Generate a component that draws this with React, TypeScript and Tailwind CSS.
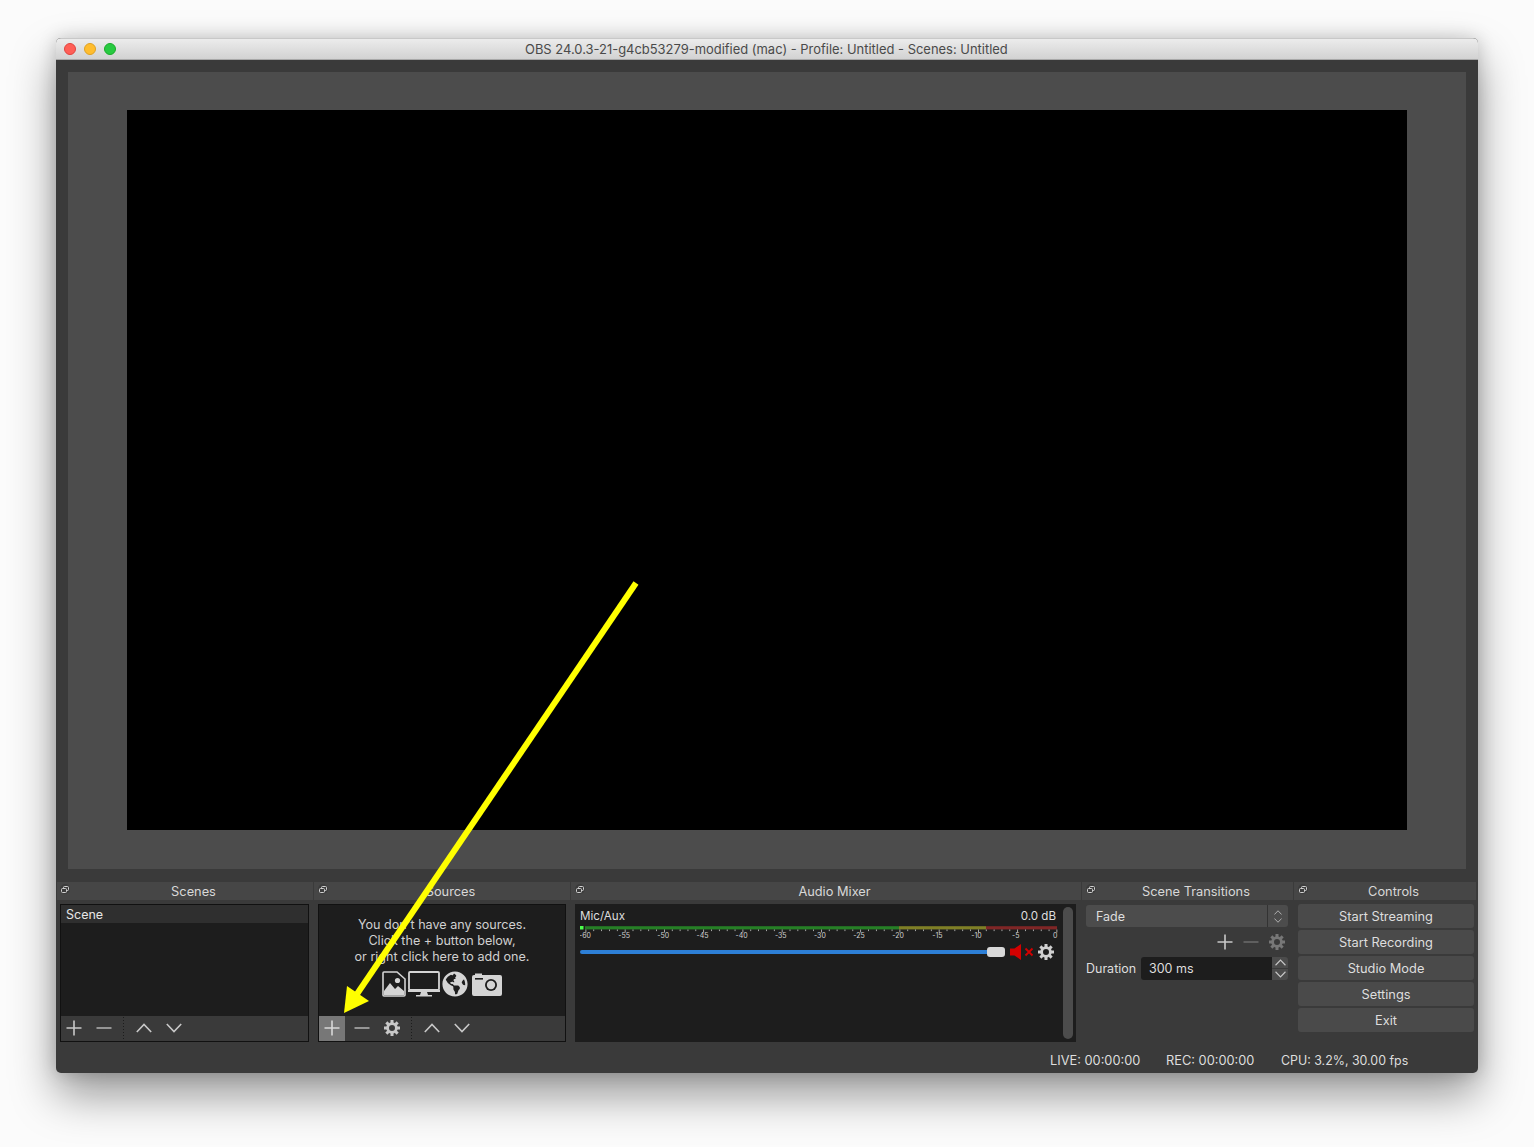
import React, { FC } from "react";
import { FaGlobeAmericas } from "react-icons/fa";

const font = "font-['Inter','Liberation_Sans',sans-serif]";

const PlusIcon: FC<{ color?: string }> = ({ color = "#c8c8c8" }) => (
  <svg width="16" height="16" viewBox="0 0 16 16">
    <path d="M8 0.5V15.5M0.5 8H15.5" stroke={color} strokeWidth="1.6" fill="none" />
  </svg>
);

const MinusIcon: FC<{ color?: string }> = ({ color = "#b4b4b4" }) => (
  <svg width="16" height="16" viewBox="0 0 16 16">
    <path d="M0.5 8H15.5" stroke={color} strokeWidth="1.5" fill="none" />
  </svg>
);

const ChevronIcon: FC<{ up?: boolean; color?: string; w?: number; h?: number }> = ({ up, color = "#c8c8c8", w = 16, h = 10 }) => (
  <svg width={w} height={h} viewBox="0 0 16 10">
    <path d={up ? "M0.8 9L8 1.5L15.2 9" : "M0.8 1L8 8.5L15.2 1"} stroke={color} strokeWidth="1.6" fill="none" />
  </svg>
);

const GearIcon: FC<{ color?: string; size?: number }> = ({ color = "#c8c8c8", size = 16 }) => (
  <svg width={size} height={size} viewBox="0 0 16 16">
    <circle cx="8" cy="8" r="4.4" stroke={color} strokeWidth="2.8" fill="none" />
    {[0, 45, 90, 135, 180, 225, 270, 315].map((deg) => (
      <rect key={deg} x="6.5" y="0" width="3" height="3" fill={color} transform={`rotate(${deg} 8 8)`} />
    ))}
  </svg>
);

const FloatIcon: FC<{ first?: boolean }> = ({ first }) => (
  <div className={`mt-[2px] flex h-[10px] w-[10px] shrink-0 items-center justify-center rounded-full bg-[#3c3c3c] ${first ? "ml-[3px]" : "ml-[4px]"}`}>
    <svg width="8" height="7" viewBox="0 0 8 7">
      <rect x="2.5" y="0.5" width="5" height="4" rx="1" fill="none" stroke="#d0d0d0" />
      <rect x="0.5" y="2.5" width="5" height="4" rx="1" fill="#3c3c3c" stroke="#d0d0d0" />
    </svg>
  </div>
);

// dock title bar + body
const Dock: FC<{ title: string; width: string; first?: boolean; children: React.ReactNode }> = ({ title, width, first, children }) => (
  <div className={`flex shrink-0 flex-col ${width}`}>
    <div className="relative flex h-[18px] items-start bg-[#464646]">
      <FloatIcon first={first} />
      <div className="absolute inset-x-0 top-0 pl-[17px] text-center text-[12.8px] leading-[20px] text-[#d8d8d8]">{title}</div>
    </div>
    {children}
  </div>
);

const ToolSlot: FC<{ children: React.ReactNode; active?: boolean }> = ({ children, active }) => (
  <div className={`flex h-full w-[26px] shrink-0 items-center justify-center pb-[1px] ${active ? "bg-[#777777]" : ""}`}>{children}</div>
);

const Dots: FC = () => (
  <div className="ml-[6px] mr-[7px] h-[24px] w-[1px] bg-[repeating-linear-gradient(to_bottom,#1c1c1c_0,#1c1c1c_1px,transparent_1px,transparent_3px)]" />
);

// audio meter: green/yellow/red bar, ticks and dB scale
const Meter: FC = () => {
  const ticks = Array.from({ length: 61 }, (_, i) => i);
  const scale = [-60, -55, -50, -45, -40, -35, -30, -25, -20, -15, -10, -5, 0];
  return (
    <svg width="482" height="16" viewBox="0 0 482 16" className="block">
      <rect x="0" y="0" width="3.5" height="3.5" fill="#4cff4c" />
      <rect x="5" y="0.2" width="314" height="3.2" fill="#267f26" />
      <rect x="319" y="0.2" width="87" height="3.2" fill="#7f7f26" />
      <rect x="406" y="0.2" width="71" height="3.2" fill="#7f2626" />
      {ticks.map((i) => {
        const x = 5.5 + i * 7.85;
        return <rect key={i} x={x} y="3.5" width="0.8" height={i % 5 === 0 ? 3 : 1.6} fill="#c8c8c8" />;
      })}
      {scale.map((db) => (
        <text key={db} x={db === 0 ? 477.5 : 5 + (db + 60) * 7.83} y="11.5" fontSize="7" fill="#d0d0d0" textAnchor={db === 0 ? "end" : "middle"} fontFamily="Inter, sans-serif">
          {db}
        </text>
      ))}
    </svg>
  );
};

const ImageIcon: FC = () => (
  <svg width="24" height="26" viewBox="0 0 24 26">
    <path d="M2 1H15L23 8V24a1 1 0 0 1-1 1H2a1 1 0 0 1-1-1V2a1 1 0 0 1 1-1Z" fill="#1d1d1d" stroke="#d4d4d4" strokeWidth="1.6" />
    <circle cx="15.5" cy="9.5" r="2.6" fill="#d4d4d4" />
    <path d="M2 24V20L8 12L13 18L16 15L22 20V24Z" fill="#d4d4d4" />
  </svg>
);

const MonitorIcon: FC = () => (
  <svg width="32" height="26" viewBox="0 0 32 26">
    <rect x="1" y="1" width="30" height="18" rx="1" fill="none" stroke="#d4d4d4" strokeWidth="1.8" />
    <rect x="0" y="19" width="32" height="2" fill="#d4d4d4" />
    <path d="M13 21H19L20 24H24V25.5H8V24H12Z" fill="#d4d4d4" />
  </svg>
);

const CameraIcon: FC = () => (
  <svg width="30" height="24" viewBox="0 0 30 24">
    <path d="M2 3H3V1.5H10V3H28a2 2 0 0 1 2 2V22a2 2 0 0 1-2 2H2a2 2 0 0 1-2-2V5a2 2 0 0 1 2-2Z" fill="#d4d4d4" />
    <circle cx="19" cy="13" r="6" fill="#1d1d1d" />
    <circle cx="19" cy="13" r="4.2" fill="#d4d4d4" />
    <rect x="3" y="6" width="8" height="1.6" fill="#1d1d1d" />
  </svg>
);

const SpeakerMuted: FC = () => (
  <svg width="25" height="16" viewBox="0 0 25 16">
    <path d="M0 4.5H4.5L11 0V16L4.5 11.5H0Z" fill="#d40000" />
    <path d="M15.5 4.5L22.5 11.5M22.5 4.5L15.5 11.5" stroke="#d40000" strokeWidth="1.8" />
  </svg>
);

const ControlButton: FC<{ label: string }> = ({ label }) => (
  <div className="flex h-[24px] items-center justify-center rounded-[3px] bg-[#4a4a4a] pt-[1px] text-[12.8px] text-[#dedede]">{label}</div>
);

const App: FC = () => {
  return (
    <div className={`relative h-[1147px] w-[1534px] overflow-hidden bg-[#fbfbfb] pl-[56px] pt-[38px] ${font}`}>
      <div className="flex h-[1035px] w-[1422px] flex-col overflow-hidden rounded-[5px] bg-[#3a3a3a] shadow-[0_22px_45px_rgba(0,0,0,0.4),0_0_18px_rgba(0,0,0,0.18)]">
        {/* Title bar */}
        <div className="relative flex h-[22px] shrink-0 items-center border-b border-t border-b-[#a8a8a8] border-t-[#c8c8c8] bg-gradient-to-b from-[#ececec] to-[#d2d2d2] pl-[8px]">
          <div className="flex gap-[8px]">
            <div className="h-[12px] w-[12px] rounded-full border border-[#e0443e] bg-[#ff5f57]" />
            <div className="h-[12px] w-[12px] rounded-full border border-[#dea123] bg-[#ffbd2e]" />
            <div className="h-[12px] w-[12px] rounded-full border border-[#1aab29] bg-[#28ca41]" />
          </div>
          <div className="absolute left-[469px] top-0 whitespace-nowrap text-[12.95px] leading-[21px] text-[#4a4a4a]">
            OBS 24.0.3-21-g4cb53279-modified (mac) - Profile: Untitled - Scenes: Untitled
          </div>
        </div>

        {/* Preview */}
        <div className="mx-[12px] mt-[12px] flex h-[797px] shrink-0 items-start justify-center bg-[#4c4c4c] pt-[38px]">
          <div className="h-[720px] w-[1280px] bg-black" />
        </div>

        {/* Docks */}
        <div className="ml-[1px] mt-[13px] flex h-[160px] shrink-0 gap-[1px]">
          <Dock title="Scenes" width="w-[256px]" first>
            <div className="ml-[3px] mt-[4px] flex h-[138px] w-[249px] flex-col border border-[#111111] bg-[#1d1d1d]">
              <div className="h-[18px] bg-[#2f2f2f] pl-[5px] text-[12.5px] leading-[20px] text-[#e6e6e6]">Scene</div>
              <div className="flex-1" />
              <div className="flex h-[25px] items-center bg-[#3a3a3a]">
                <ToolSlot><PlusIcon /></ToolSlot>
                <div className="w-[4px]" />
                <ToolSlot><MinusIcon /></ToolSlot>
                <Dots />
                <ToolSlot><ChevronIcon up /></ToolSlot>
                <div className="w-[4px]" />
                <ToolSlot><ChevronIcon /></ToolSlot>
              </div>
            </div>
          </Dock>

          <Dock title="Sources" width="w-[256px]">
            <div className="ml-[4px] mt-[4px] flex h-[138px] w-[248px] flex-col border border-[#111111] bg-[#1d1d1d]">
              <div className="flex flex-1 flex-col items-center pt-[12px]">
                <div className="text-center text-[12.6px] leading-[16px] text-[#d0d0d0]">
                  <div>You don't have any sources.</div>
                  <div>Click the + button below,</div>
                  <div>or right click here to add one.</div>
                </div>
                <div className="mt-[6px] flex items-center">
                  <ImageIcon />
                  <div className="w-[2px]" />
                  <MonitorIcon />
                  <div className="w-[2px]" />
                  <FaGlobeAmericas size={26} color="#d4d4d4" />
                  <div className="w-[4px]" />
                  <CameraIcon />
                </div>
              </div>
              <div className="flex h-[25px] items-center bg-[#3a3a3a]">
                <ToolSlot active><PlusIcon color="#d8d8d8" /></ToolSlot>
                <div className="w-[4px]" />
                <ToolSlot><MinusIcon /></ToolSlot>
                <div className="w-[4px]" />
                <ToolSlot><GearIcon /></ToolSlot>
                <Dots />
                <ToolSlot><ChevronIcon up /></ToolSlot>
                <div className="w-[4px]" />
                <ToolSlot><ChevronIcon /></ToolSlot>
              </div>
            </div>
          </Dock>

          <Dock title="Audio Mixer" width="w-[510px]">
            <div className="ml-[4px] mt-[4px] flex h-[138px] w-[501px] bg-[#1d1d1d] pl-[5px] pr-[2px]">
              <div className="flex w-[482px] shrink-0 flex-col">
                <div className="flex h-[21px] items-end justify-between pr-[6px] text-[11.6px] leading-[17px] text-[#dedede]">
                  <span>Mic/Aux</span>
                  <span>0.0 dB</span>
                </div>
                <div className="mt-[1px]"><Meter /></div>
                <div className="mt-[2px] flex h-[16px] items-center">
                  <div className="h-[4px] w-[407px] rounded-l-[2px] bg-[#2d7fd6]" />
                  <div className="h-[10px] w-[18px] rounded-[3px] bg-[#d8d8d8]" />
                  <div className="ml-[5px]"><SpeakerMuted /></div>
                  <div className="ml-[3px]"><GearIcon color="#d0d0d0" size={16} /></div>
                </div>
              </div>
              <div className="ml-[1px] mt-[3px] h-[132px] w-[10px] rounded-full bg-[#4c4c4c]" />
            </div>
          </Dock>

          <Dock title="Scene Transitions" width="w-[211px]">
            <div className="flex flex-col pl-[4px] pr-[5px] pt-[5px]">
              <div className="flex h-[22px] w-[202px] items-center rounded-[3px] bg-[#4c4c4c] text-[12.5px] text-[#dedede]">
                <div className="flex-1 pl-[10px] pt-[2px]">Fade</div>
                <div className="flex h-full w-[21px] flex-col items-center justify-center gap-[3px] border-l border-[#333333]">
                  <ChevronIcon up w={8} h={5} />
                  <ChevronIcon w={8} h={5} />
                </div>
              </div>
              <div className="mt-[7px] flex h-[16px] w-[202px] items-center justify-end gap-[10px] pr-[3px]">
                <PlusIcon />
                <MinusIcon color="#6c6c6c" />
                <GearIcon color="#777777" />
              </div>
              <div className="mt-[7px] flex h-[23px] w-[202px] items-center">
                <div className="w-[55px] pt-[1px] text-[12.5px] text-[#dedede]">Duration</div>
                <div className="flex h-full w-[131px] items-center rounded-l-[3px] bg-[#1d1d1d] pl-[8px] pt-[1px] text-[12.5px] text-[#dedede]">300 ms</div>
                <div className="flex h-full w-[16px] flex-col gap-[1px]">
                  <div className="flex flex-1 items-center justify-center rounded-tr-[3px] bg-[#4c4c4c]"><ChevronIcon up w={11} h={7} /></div>
                  <div className="flex flex-1 items-center justify-center rounded-br-[3px] bg-[#4c4c4c]"><ChevronIcon w={11} h={7} /></div>
                </div>
              </div>
            </div>
          </Dock>

          <Dock title="Controls" width="w-[182px]">
            <div className="flex flex-col gap-[2px] pl-[4px] pr-[2px] pt-[4px]">
              <ControlButton label="Start Streaming" />
              <ControlButton label="Start Recording" />
              <ControlButton label="Studio Mode" />
              <ControlButton label="Settings" />
              <ControlButton label="Exit" />
            </div>
          </Dock>
        </div>

        {/* Status bar */}
        <div className="flex flex-1 items-center pl-[994px] pt-[7px] text-[12.8px] text-[#dedede]">
          <span className="w-[116px]">LIVE: 00:00:00</span>
          <span className="w-[115px]">REC: 00:00:00</span>
          <span className="text-[12.4px]">CPU: 3.2%, 30.00 fps</span>
        </div>
      </div>

      {/* Annotation arrow */}
      <svg className="pointer-events-none absolute left-0 top-0" width="1534" height="1147" viewBox="0 0 1534 1147">
        <path d="M636 583L357 994" stroke="#ffff00" strokeWidth="6" fill="none" />
        <path d="M344 1013L347 986L369 1001Z" fill="#ffff00" />
      </svg>
    </div>
  );
};

export default App;
